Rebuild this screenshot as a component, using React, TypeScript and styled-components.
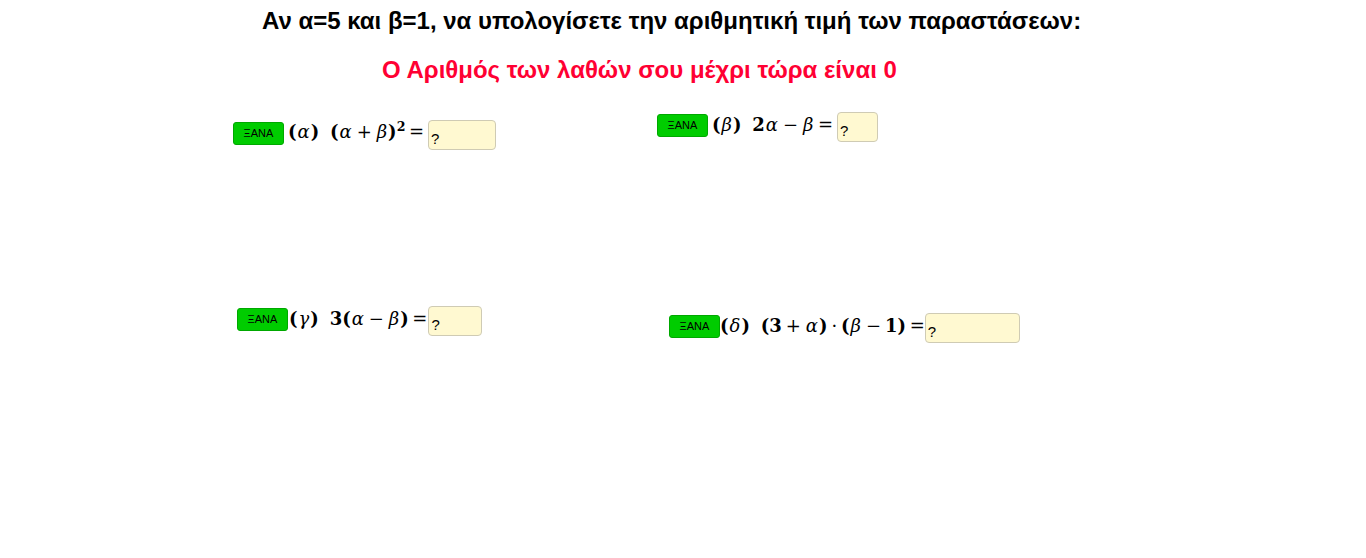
import { FC, ReactNode } from "react";
import styled, { createGlobalStyle } from "styled-components";

const GlobalStyle = createGlobalStyle`
    html, body {
        margin: 0;
        padding: 0;
        background: #ffffff;
    }
    body {
        font-family: "Liberation Sans", Arial, sans-serif;
    }
`;

type exerciseType = {
    left: number;
    top: number;
    gap: number;
    boxWidth: number;
    children: ReactNode;
}

/* GeoGebra の自由キャンバス: 各設問はキャンバス上の座標で配置される */
const Exercise: FC<exerciseType> = ({ left, top, gap, boxWidth, children }) => {
    return (
        <ExerciseRow $left={left} $top={top} $gap={gap}>
            <RetryButton type="button">ΞΑΝΑ</RetryButton>
            <MathLine>{children}</MathLine>
            <AnswerBox $width={boxWidth}>?</AnswerBox>
        </ExerciseRow>
    );
};

export default function App() {
    return (
        <>
            <GlobalStyle />
            <Canvas>
                <Title>Αν α=5 και β=1, να υπολογίσετε την αριθμητική τιμή των παραστάσεων:</Title>
                <Mistakes>Ο Αριθμός των λαθών σου μέχρι τώρα είναι 0</Mistakes>

                <Exercise left={233} top={120} gap={4} boxWidth={68}>
                    (<V>α</V>)<Quad />(<V>α</V><Op>+</Op><V>β</V>)<Sup>2</Sup><Eq>=</Eq>
                </Exercise>

                <Exercise left={657} top={112} gap={4} boxWidth={41}>
                    (<V>β</V>)<Quad />2<V>α</V><Op>−</Op><V>β</V><Eq>=</Eq>
                </Exercise>

                <Exercise left={237} top={306} gap={1} boxWidth={54}>
                    (<V>γ</V>)<Quad />3(<V>α</V><Op>−</Op><V>β</V>)<Eq>=</Eq>
                </Exercise>

                <Exercise left={669} top={313} gap={0} boxWidth={95}>
                    (<V>δ</V>)<Quad />(3<Op>+</Op><V>α</V>)<Op>·</Op>(<V>β</V><Op>−</Op>1)<Eq>=</Eq>
                </Exercise>
            </Canvas>
        </>
    );
}

const Canvas = styled.div`
    position: relative;
    width: 1366px;
    height: 558px;
    overflow: hidden;
    background: #ffffff;
`;

const Title = styled.h1`
    margin: 0;
    padding: 7px 0 0 262px;
    font-size: 24px;
    line-height: 28px;
    font-weight: 700;
    color: #000000;
    white-space: nowrap;
`;

const Mistakes = styled.h2`
    margin: 0;
    padding: 21px 0 0 382px;
    font-size: 24px;
    line-height: 28px;
    font-weight: 700;
    color: #ff0033;
    white-space: nowrap;
`;

const ExerciseRow = styled.div<{ $left: number; $top: number; $gap: number }>`
    position: absolute;
    left: ${(p) => p.$left}px;
    top: ${(p) => p.$top}px;
    display: flex;
    align-items: center;
    gap: ${(p) => p.$gap}px;
    height: 30px;
`;

const RetryButton = styled.button`
    width: 51px;
    height: 23px;
    padding: 0;
    margin-top: -3px;
    border: 1px solid #00a800;
    border-radius: 3px;
    background: #00cc00;
    color: #000000;
    font-family: "Liberation Sans", Arial, sans-serif;
    font-size: 11px;
    line-height: 21px;
    cursor: pointer;
`;

const MathLine = styled.span`
    display: inline-block;
    margin-top: -4px;
    font-family: "DejaVu Serif", "Liberation Serif", serif;
    font-size: 18px;
    line-height: 24px;
    font-weight: 700;
    color: #000000;
    white-space: nowrap;
`;

const V = styled.i`
    font-style: italic;
    font-weight: 400;
    padding: 0 1px;
`;

const Op = styled.span`
    margin: 0 0.22em;
    font-weight: 400;
`;

const Eq = styled.span`
    margin-left: 0.2em;
    font-weight: 400;
`;

const Quad = styled.span`
    display: inline-block;
    width: 0.6em;
`;

const Sup = styled.span`
    position: relative;
    top: -0.55em;
    font-size: 0.7em;
`;

const AnswerBox = styled.div<{ $width: number }>`
    box-sizing: border-box;
    width: ${(p) => p.$width}px;
    height: 30px;
    padding: 8px 0 0 2px;
    border: 1px solid #cfcbb4;
    border-radius: 4px;
    background: #fff9d1;
    color: #000000;
    font-family: "Liberation Sans", Arial, sans-serif;
    font-size: 15px;
    line-height: 20px;
`;
